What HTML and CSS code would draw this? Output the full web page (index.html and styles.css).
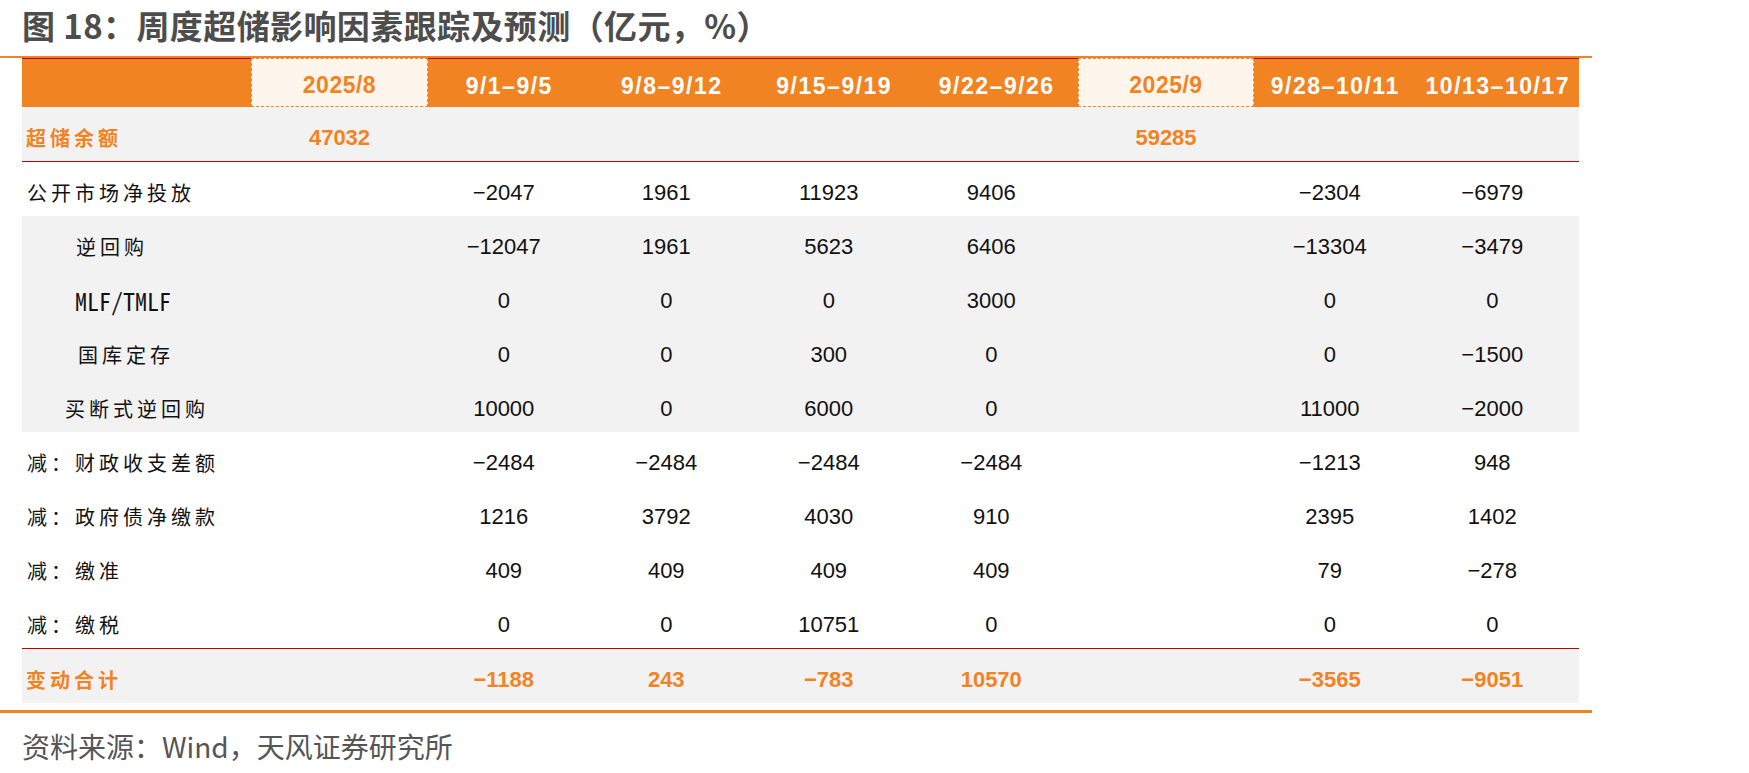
FILE: index.html
```html
<!DOCTYPE html>
<html lang="zh-CN">
<head>
<meta charset="utf-8">
<title>周度超储影响因素跟踪及预测</title>
<link rel="stylesheet" href="styles.css">
</head>
<body>
<div class="page">
  <h1 class="title">图 18：周度超储影响因素跟踪及预测（亿元，%）</h1>
  <div class="rule rule-top"></div>
  <div class="table">
    <div class="row head">
      <div class="cell"></div>
      <div class="cell cream">2025/8</div>
      <div class="cell">9/1–9/5</div>
      <div class="cell">9/8–9/12</div>
      <div class="cell">9/15–9/19</div>
      <div class="cell">9/22–9/26</div>
      <div class="cell cream">2025/9</div>
      <div class="cell">9/28–10/11</div>
      <div class="cell">10/13–10/17</div>
    </div>
    <div class="row gray key key-top">
      <div class="cell label">超储余额</div>
      <div class="cell">47032</div>
      <div class="cell"></div><div class="cell"></div><div class="cell"></div><div class="cell"></div>
      <div class="cell">59285</div>
      <div class="cell"></div><div class="cell"></div>
    </div>
    <div class="row">
      <div class="cell label">公开市场净投放</div>
      <div class="cell"></div>
      <div class="cell">−2047</div><div class="cell">1961</div><div class="cell">11923</div><div class="cell">9406</div>
      <div class="cell"></div>
      <div class="cell">−2304</div><div class="cell">−6979</div>
    </div>
    <div class="row gray">
      <div class="cell label ind-a">逆回购</div>
      <div class="cell"></div>
      <div class="cell">−12047</div><div class="cell">1961</div><div class="cell">5623</div><div class="cell">6406</div>
      <div class="cell"></div>
      <div class="cell">−13304</div><div class="cell">−3479</div>
    </div>
    <div class="row gray">
      <div class="cell label ind-b mono">MLF/TMLF</div>
      <div class="cell"></div>
      <div class="cell">0</div><div class="cell">0</div><div class="cell">0</div><div class="cell">3000</div>
      <div class="cell"></div>
      <div class="cell">0</div><div class="cell">0</div>
    </div>
    <div class="row gray">
      <div class="cell label ind-c">国库定存</div>
      <div class="cell"></div>
      <div class="cell">0</div><div class="cell">0</div><div class="cell">300</div><div class="cell">0</div>
      <div class="cell"></div>
      <div class="cell">0</div><div class="cell">−1500</div>
    </div>
    <div class="row gray">
      <div class="cell label ind-d">买断式逆回购</div>
      <div class="cell"></div>
      <div class="cell">10000</div><div class="cell">0</div><div class="cell">6000</div><div class="cell">0</div>
      <div class="cell"></div>
      <div class="cell">11000</div><div class="cell">−2000</div>
    </div>
    <div class="row">
      <div class="cell label">减：财政收支差额</div>
      <div class="cell"></div>
      <div class="cell">−2484</div><div class="cell">−2484</div><div class="cell">−2484</div><div class="cell">−2484</div>
      <div class="cell"></div>
      <div class="cell">−1213</div><div class="cell">948</div>
    </div>
    <div class="row">
      <div class="cell label">减：政府债净缴款</div>
      <div class="cell"></div>
      <div class="cell">1216</div><div class="cell">3792</div><div class="cell">4030</div><div class="cell">910</div>
      <div class="cell"></div>
      <div class="cell">2395</div><div class="cell">1402</div>
    </div>
    <div class="row">
      <div class="cell label">减：缴准</div>
      <div class="cell"></div>
      <div class="cell">409</div><div class="cell">409</div><div class="cell">409</div><div class="cell">409</div>
      <div class="cell"></div>
      <div class="cell">79</div><div class="cell">−278</div>
    </div>
    <div class="row">
      <div class="cell label">减：缴税</div>
      <div class="cell"></div>
      <div class="cell">0</div><div class="cell">0</div><div class="cell">10751</div><div class="cell">0</div>
      <div class="cell"></div>
      <div class="cell">0</div><div class="cell">0</div>
    </div>
    <div class="row gray key key-bottom">
      <div class="cell label">变动合计</div>
      <div class="cell"></div>
      <div class="cell">−1188</div><div class="cell">243</div><div class="cell">−783</div><div class="cell">10570</div>
      <div class="cell"></div>
      <div class="cell">−3565</div><div class="cell">−9051</div>
    </div>
  </div>
  <div class="rule rule-bottom"></div>
  <p class="source">资料来源：Wind，天风证券研究所</p>
</div>
</body>
</html>
```

FILE: styles.css
```css
html, body {
  margin: 0;
  padding: 0;
  background: #ffffff;
}

.page {
  width: 1749px;
  font-family: "Noto Sans CJK SC", "Liberation Sans", sans-serif;
}

.title {
  margin: 0;
  height: 56px;
  padding-left: 22px;
  font-size: 33px;
  line-height: 50px;
  font-weight: 700;
  color: #4d4d4d;
  white-space: nowrap;
  letter-spacing: 0.4px;
}

.rule {
  width: 1592px;
  background: #f28323;
}

.rule-top {
  height: 2px;
}

.rule-bottom {
  height: 3px;
  margin-top: 7px;
}

.table {
  margin-left: 22px;
  width: 1557px;
}

.row {
  display: grid;
  grid-template-columns: 229px 177px repeat(4, 162.5px) 176px repeat(2, 162.5px);
  height: 54px;
  box-sizing: border-box;
  align-items: center;
  font-family: "Liberation Sans", Arial, sans-serif;
  font-size: 22px;
  color: #111111;
}

.row.gray {
  background: #f2f2f2;
}

.cell {
  text-align: center;
  padding-top: 7px;
  white-space: nowrap;
}

.row:not(.head) .cell:nth-child(n+3):not(:nth-child(7)) {
  padding-right: 11px;
}

.label {
  text-align: left;
  padding-left: 5px;
  font-family: "Noto Sans CJK SC", sans-serif;
  font-size: 20px;
  letter-spacing: 4px;
}

.label.mono {
  font-family: "Noto Sans Mono CJK SC", "Liberation Sans", sans-serif;
  font-size: 24px;
  letter-spacing: 0;
}

.ind-a { padding-left: 54px; }
.ind-b { padding-left: 53px; }
.ind-c { padding-left: 56px; }
.ind-d { padding-left: 43px; }

.head {
  height: 49px;
  align-items: stretch;
  background: #f28323;
  color: #ffffff;
  font-weight: 700;
  font-size: 23px;
  letter-spacing: 1.5px;
}

.head .cell {
  display: flex;
  align-items: center;
  justify-content: center;
  box-sizing: border-box;
  border-top: 1px solid #c00000;
  padding-top: 6px;
}

.head .cell.cream {
  background: #fef6ec;
  color: #f28323;
  border: 1px dashed #f28323;
  letter-spacing: 0.5px;
}

.key {
  color: #f28323;
  font-weight: 700;
  height: 55px;
}

.key .label {
  padding-left: 4px;
}

.key-top {
  border-bottom: 1px solid #c00000;
}

.key-bottom {
  border-top: 1px solid #c00000;
}

.source {
  margin: 13px 0 0;
  padding-left: 22px;
  font-size: 28px;
  line-height: 40px;
  color: #555555;
  font-weight: 400;
}
```
